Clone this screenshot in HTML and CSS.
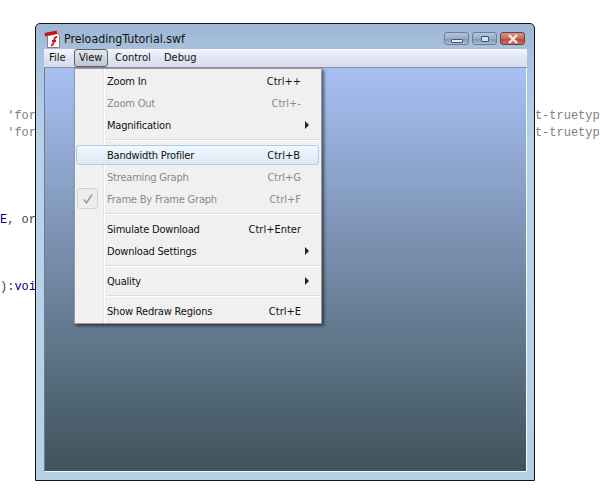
FILE: index.html
```html
<!DOCTYPE html>
<html lang="en">
<head>
<meta charset="utf-8">
<title>PreloadingTutorial.swf</title>
<link rel="stylesheet" href="styles.css">
</head>
<body>
<pre class="code"><span class="line-a"> 'for                                                                     <span class="tail">t-truetype</span></span>
<span class="line-b"> 'for                                                                     <span class="tail">t-truetype</span></span>
<span class="line-c"><span class="kw">E</span>, or</span>
<span class="line-d">):<span class="kw">voi</span></span></pre>

<div class="window">
  <div class="titlebar">
    <svg class="app-icon" width="18" height="18" viewBox="0 0 18 18">
      <path d="M3.500 2.500h9l3 3v12h-12z" fill="#fff" stroke="#8a7f7f"/>
      <path d="M0.500 3l12-2.500.8 3.500-12 2.500z" fill="#c8141a"/>
      <path d="M7 15.500c2.500-.5 2.800-3 3.200-5.500.3-2 1-3 3-3.300M8 11h4" fill="none" stroke="#d3161c" stroke-width="1.800"/>
    </svg>
    <span class="title">PreloadingTutorial.swf</span>
    <div class="controls">
      <button class="ctl"><span class="glyph-min"></span></button>
      <button class="ctl"><span class="glyph-max"></span></button>
      <button class="ctl ctl-close">
        <svg width="14" height="10" viewBox="0 0 14 10"><path d="M3 1l8 8M11 1l-8 8" stroke="#f4eeec" stroke-width="2.400" fill="none"/></svg>
      </button>
    </div>
  </div>
  <div class="menubar">
    <span class="top-item top-file">File</span>
    <span class="top-item top-open">View</span>
    <span class="top-item top-control">Control</span>
    <span class="top-item">Debug</span>
  </div>
  <div class="stage"></div>
</div>

<div class="menu">
  <div class="row"><span class="label">Zoom In</span><span class="key">Ctrl++</span></div>
  <div class="row off"><span class="label">Zoom Out</span><span class="key">Ctrl+-</span></div>
  <div class="row"><span class="label">Magnification</span><i class="arrow"></i></div>
  <div class="sep"></div>
  <div class="row hot"><span class="label">Bandwidth Profiler</span><span class="key">Ctrl+B</span></div>
  <div class="row off"><span class="label">Streaming Graph</span><span class="key">Ctrl+G</span></div>
  <div class="row off">
    <span class="check"><svg width="12" height="12" viewBox="0 0 12 12"><path d="M2 6.500l2.500 3.500L10 1.500" fill="none" stroke="#9a9a9a" stroke-width="1.500"/></svg></span>
    <span class="label">Frame By Frame Graph</span><span class="key">Ctrl+F</span>
  </div>
  <div class="sep"></div>
  <div class="row"><span class="label">Simulate Download</span><span class="key">Ctrl+Enter</span></div>
  <div class="row"><span class="label">Download Settings</span><i class="arrow"></i></div>
  <div class="sep"></div>
  <div class="row"><span class="label">Quality</span><i class="arrow"></i></div>
  <div class="sep"></div>
  <div class="row"><span class="label">Show Redraw Regions</span><span class="key">Ctrl+E</span></div>
</div>
</body>
</html>
```

FILE: styles.css
```css
html, body {
  margin: 0;
  padding: 0;
  width: 600px;
  height: 493px;
  overflow: hidden;
  background: #fff;
  font-family: "DejaVu Sans Condensed", "Liberation Sans", sans-serif;
}

.code {
  margin: 0;
  padding-top: 109px;
  font: 12px/14px "Liberation Mono", monospace;
  color: #808080;
  white-space: pre;
  overflow: hidden;
  display: flex;
  flex-direction: column;
}
.code > span { display: block; }
.code .kw { color: #00008c; }
.code .tail { margin-left: 2px; }
.line-b { margin-top: 3px; }
.line-c { margin-top: 73px; color: #444; }
.line-d { margin-top: 53px; color: #444; }

.window {
  position: absolute;
  left: 35px;
  top: 23px;
  box-sizing: content-box;
  width: 482px;
  height: 448px;
  border: 1px solid #101418;
  border-radius: 5px 5px 0 0;
  background: linear-gradient(#9fb6d3 0, #a9c3de 30px, #b8d2ea 120px, #b6d0e8 100%);
  display: flex;
  flex-direction: column;
  padding: 0 8px 8px;
}

.titlebar {
  height: 25px;
  flex: none;
  display: flex;
  align-items: center;
}
.app-icon { margin-top: 4px; flex: none; }
.title {
  margin-left: 2px;
  margin-top: 5px;
  font-size: 12.300px;
  color: #111;
}
.controls {
  margin-left: auto;
  margin-right: 1px;
  margin-top: 4px;
  display: flex;
  gap: 3px;
}
.ctl {
  width: 23px;
  height: 11px;
  padding: 0;
  box-sizing: content-box;
  border: 1px solid #6d7f95;
  border-radius: 3px;
  background: linear-gradient(#b4c6da, #97aec8 50%, #7f98b6 55%, #a5bdd4);
  display: flex;
  align-items: center;
  justify-content: center;
}
.ctl-close {
  border-color: #7c3a35;
  background: linear-gradient(#d39a8d, #c46a5b 50%, #b54a3c 55%, #c9705f);
}
.glyph-min {
  width: 10px;
  height: 2px;
  margin-top: 4px;
  border: 1px solid #4a5a6c;
  border-radius: 1px;
  background: #e8edf3;
}
.glyph-max {
  width: 8px;
  height: 6px;
  box-sizing: border-box;
  border: 1px solid #43536a;
  border-radius: 1px;
  background: #d6e0ec;
}

.menubar {
  height: 19px;
  flex: none;
  box-sizing: border-box;
  display: flex;
  align-items: center;
  font-size: 11px;
  color: #111;
  background: linear-gradient(#f5f7fb, #dfe3f1 55%, #d7dcec);
  border-bottom: 1px solid #8d8f9c;
  width: 483px;
}
.top-item {
  height: 18px;
  line-height: 17px;
  padding: 0 5px;
  box-sizing: border-box;
  white-space: nowrap;
}
.top-file { width: 29px; }
.top-control { width: 51px; padding: 0 0 0 7px; }
.top-open {
  margin-left: 1px;
  width: 34px;
  height: 18px;
  border: 1px solid #5b6270;
  border-radius: 3px;
  line-height: 15px;
  padding: 0 0 0 4px;
  background: linear-gradient(#e4e6ea, #bfc6d2);
}

.stage {
  flex: 1;
  min-height: 0;
  width: 483px;
  box-sizing: border-box;
  background: linear-gradient(#a8c0f4, #3e5359);
  border-left: 1px solid #6e7c8c;
  border-right: 1px solid #f6f8fb;
  border-bottom: 1px solid #f6f8fb;
}

.menu {
  position: absolute;
  left: 74px;
  top: 68px;
  width: 248px;
  height: 256px;
  box-sizing: border-box;
  padding: 1px;
  border: 1px solid #9a9a9a;
  background: linear-gradient(90deg, #f1f1f1 0, #f1f1f1 28px, #e2e3e3 28px, #e2e3e3 29px, #fff 29px, #fff 30px, #f0f0f0 30px);
  box-shadow: 2px 2px 3px rgba(0, 0, 0, .55);
  font-size: 11px;
  color: #111;
  display: flex;
  flex-direction: column;
}
.row {
  position: relative;
  height: 22px;
  flex: none;
  display: flex;
  align-items: center;
  padding: 0 19px 0 31px;
  box-sizing: border-box;
  white-space: nowrap;
}
.label { flex: 1; letter-spacing: -0.200px; }
.key { flex: none; }
.off { color: #8a8a8a; }
.hot {
  height: 20px;
  margin: 1px 0;
  width: 243px;
  border: 1px solid #a8d0ee;
  border-radius: 3px;
  padding: 0 18px 0 30px;
  background: linear-gradient(#f2f7fc, #dbe9f6);
}
.check {
  position: absolute;
  left: 1px;
  top: 0;
  width: 21px;
  height: 21px;
  box-sizing: border-box;
  border: 1px solid #cfcfcf;
  border-radius: 3px;
  background: #ededed;
  display: flex;
  align-items: center;
  justify-content: center;
}
.arrow {
  width: 0;
  height: 0;
  margin-right: -8px;
  border-left: 4px solid #222;
  border-top: 4px solid transparent;
  border-bottom: 4px solid transparent;
}
.sep {
  flex: none;
  height: 2px;
  margin: 3px 0 3px 30px;
  background: linear-gradient(#dcdcdc 50%, #fff 50%);
}
```
